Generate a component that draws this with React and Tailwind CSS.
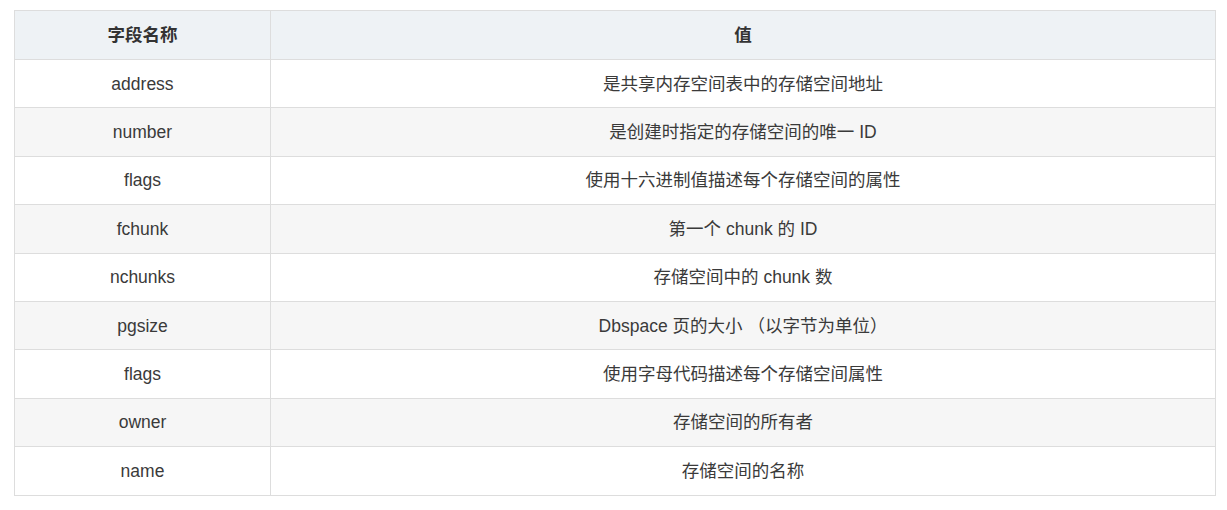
import React from "react";

const rows = [
  ["address", "是共享内存空间表中的存储空间地址"],
  ["number", "是创建时指定的存储空间的唯一 ID"],
  ["flags", "使用十六进制值描述每个存储空间的属性"],
  ["fchunk", "第一个 chunk 的 ID"],
  ["nchunks", "存储空间中的 chunk 数"],
  ["pgsize", "Dbspace 页的大小 （以字节为单位）"],
  ["flags", "使用字母代码描述每个存储空间属性"],
  ["owner", "存储空间的所有者"],
  ["name", "存储空间的名称"],
];

export default function App() {
  return (
    <div
      className="w-[1227px] h-[510px] bg-white pt-[10px] pl-[14px]"
      style={{ fontFamily: '"Liberation Sans", Arial, "Noto Sans CJK SC", sans-serif' }}
    >
      <table className="w-[1202px] border-collapse table-fixed text-[17.5px] text-[#3a3a3a]">
        <colgroup>
          <col className="w-[256px]" />
          <col />
        </colgroup>
        <thead>
          <tr className="bg-[#eef2f5] h-[49px]">
            <th className="border border-[#dddddd] text-center font-bold p-0 text-[#333333]">字段名称</th>
            <th className="border border-[#dddddd] text-center font-bold p-0 text-[#333333]">值</th>
          </tr>
        </thead>
        <tbody>
          {rows.map(([k, v], i) => (
            <tr key={i} className={(i % 2 === 1 ? "bg-[#f6f6f6]" : "bg-white") + " h-[48.4px]"}>
              <td className="border border-[#dddddd] text-center p-0">{k}</td>
              <td className="border border-[#dddddd] text-center p-0">{v}</td>
            </tr>
          ))}
        </tbody>
      </table>
    </div>
  );
}
